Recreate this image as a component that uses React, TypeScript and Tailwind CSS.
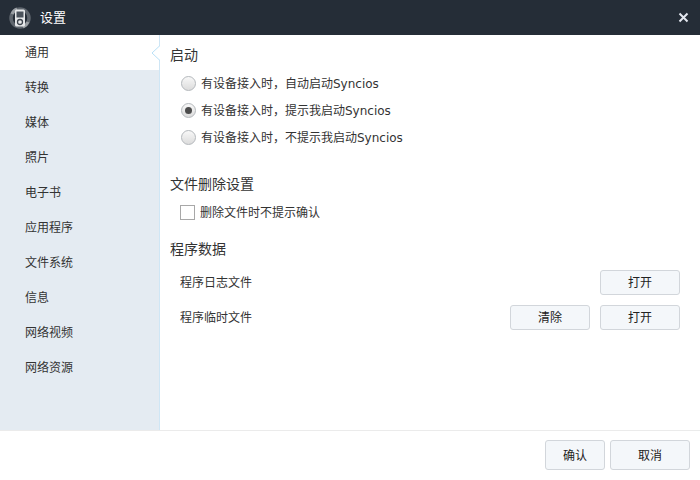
const font = '[font-family:"DejaVu_Sans","Noto_Sans_CJK_SC",sans-serif]';
const navItems = ["通用", "转换", "媒体", "照片", "电子书", "应用程序", "文件系统", "信息", "网络视频", "网络资源"];

function Logo() {
  return (
    <svg width="22" height="22" viewBox="0 0 22 22" className="shrink-0">
      <circle cx="11" cy="11" r="9" fill="none" stroke="#5f666e" strokeWidth="3.5" />
      <path d="M3 7a9 9 0 0 1 5-5" stroke="#9a9fa4" strokeWidth="3" fill="none" />
      <path d="M19 15a9 9 0 0 1-5 5" stroke="#9a9fa4" strokeWidth="3" fill="none" />
      <rect x="6" y="2.5" width="10" height="17" rx="1.5" fill="#e6e8ea" />
      <rect x="7.5" y="4.5" width="7" height="6" fill="#4b535c" />
      <circle cx="11" cy="15" r="2.5" fill="none" stroke="#3d444d" strokeWidth="1.3" />
    </svg>
  );
}

function Radio({ checked, label }: { checked?: boolean; label: string }) {
  return (
    <div className="flex h-[27px] items-center">
      <span className="flex h-[15px] w-[15px] items-center justify-center rounded-full border border-[#b4b8bc] bg-gradient-to-b from-[#f8f8f8] to-[#dcdcdc]">
        {checked && <span className="h-[7px] w-[7px] rounded-full bg-[#4c4c4c]" />}
      </span>
      <span className="ml-[5px] text-xs text-[#333]">{label}</span>
    </div>
  );
}

function Btn({ label, w, h }: { label: string; w: string; h: string }) {
  return (
    <button className={`rounded-[3px] border border-[#d2d6db] bg-[#f4f7fa] pt-px text-xs text-[#222] ${w} ${h}`}>{label}</button>
  );
}

export default function App() {
  return (
    <div className={`flex h-[480px] w-[700px] flex-col overflow-hidden bg-white ${font}`}>
      <header className="flex h-[35px] shrink-0 items-center bg-[#252d37] pl-[9px] pr-[11px]">
        <Logo />
        <span className="ml-[9px] text-[13px] text-white">设置</span>
        <svg width="11" height="11" viewBox="0 0 11 11" className="ml-auto">
          <path d="M1.5 1.5l8 8M9.5 1.5l-8 8" stroke="#e3e7ef" strokeWidth="2" />
        </svg>
      </header>
      <div className="flex h-[395px] shrink-0">
        <nav className="relative w-[160px] shrink-0 border-r border-[#cfe6f5] bg-[#e4ebf2]">
          {navItems.map((item, i) => (
            <div key={item} className={`flex h-[35px] items-center pl-[25px] text-xs text-[#333] ${i === 0 ? "bg-white" : ""}`}>
              {item}
            </div>
          ))}
          <svg width="9" height="16" viewBox="0 0 9 16" className="absolute left-[151px] top-[10px]">
            <path d="M9 0.5L1 8l8 7.5" fill="#fff" stroke="#b9e0f7" />
          </svg>
        </nav>
        <main className="flex-1 pl-[10px] pr-[20px] pt-[11px]">
          <h2 className="text-sm leading-[18px] text-[#333]">启动</h2>
          <div className="ml-[11px] mt-[6px]">
            <Radio label="有设备接入时，自动启动Syncios" />
            <Radio checked label="有设备接入时，提示我启动Syncios" />
            <Radio label="有设备接入时，不提示我启动Syncios" />
          </div>
          <h2 className="mt-[24px] text-sm leading-[18px] text-[#333]">文件删除设置</h2>
          <div className="ml-[10px] mt-[12px] flex h-[15px] items-center">
            <span className="h-[15px] w-[15px] border border-[#a8a8a8] bg-white" />
            <span className="ml-[5px] text-xs text-[#333]">删除文件时不提示确认</span>
          </div>
          <h2 className="mt-[20px] text-sm leading-[18px] text-[#333]">程序数据</h2>
          <div className="ml-[10px] mt-[12px] flex h-[25px] items-center">
            <span className="text-xs text-[#333]">程序日志文件</span>
            <div className="ml-auto"><Btn label="打开" w="w-[80px]" h="h-[25px]" /></div>
          </div>
          <div className="ml-[10px] mt-[10px] flex h-[25px] items-center">
            <span className="text-xs text-[#333]">程序临时文件</span>
            <div className="ml-auto flex gap-[10px]">
              <Btn label="清除" w="w-[80px]" h="h-[25px]" />
              <Btn label="打开" w="w-[80px]" h="h-[25px]" />
            </div>
          </div>
        </main>
      </div>
      <footer className="flex flex-1 items-start justify-end gap-[5px] border-t border-[#ebebeb] pr-[10px] pt-[9px]">
        <Btn label="确认" w="w-[60px]" h="h-[30px]" />
        <Btn label="取消" w="w-[80px]" h="h-[30px]" />
      </footer>
    </div>
  );
}
